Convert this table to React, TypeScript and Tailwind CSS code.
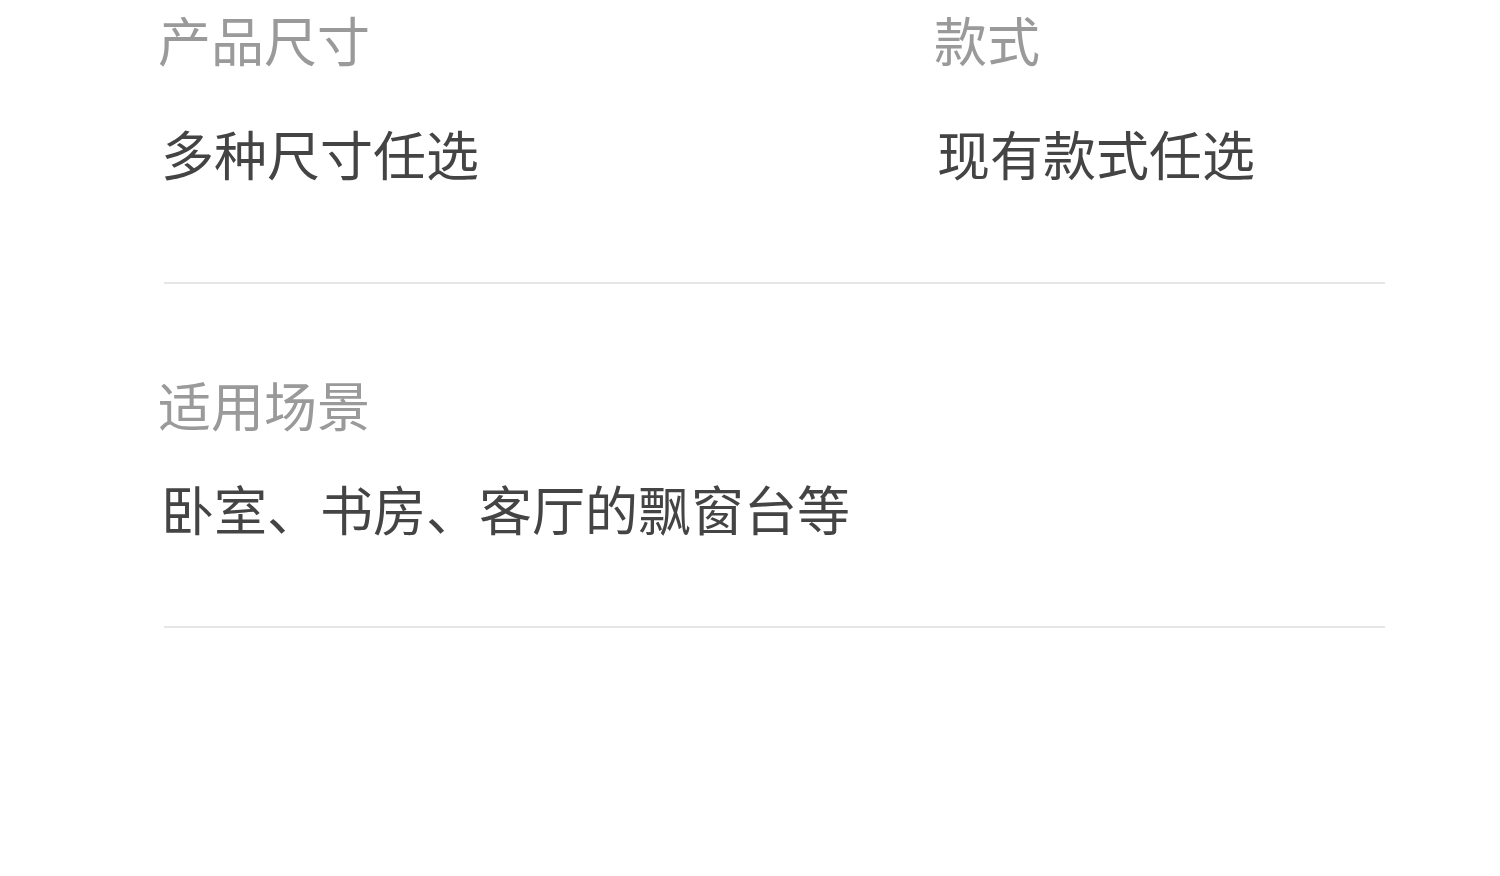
const rows = [
  [
    { label: '产品尺寸', value: '多种尺寸任选' },
    { label: '款式', value: '现有款式任选' },
  ],
  [{ label: '适用场景', value: '卧室、书房、客厅的飘窗台等' }],
];

export default function App() {
  return (
    <div
      className="min-h-screen bg-white"
      style={{ fontFamily: '"Noto Sans CJK SC", "Noto Sans", sans-serif' }}
    >
      <div className="pl-[158px] pr-[115px] pt-[13px]">
        {/* Row 1 */}
        <div className="flex">
          {rows[0].map((item, i) => (
            <div key={item.label} className={i === 0 ? 'w-[776px]' : 'flex-1'}>
              <div className="text-[53px] leading-[53px] text-[#9a9a9a]">{item.label}</div>
              <div className="mt-[61px] pl-[3px] text-[53px] leading-[53px] text-[#444]">{item.value}</div>
            </div>
          ))}
        </div>
        <div className="ml-[6px] mt-[102px] h-[2px] bg-[#e6e6e6]" />

        {/* Row 2 */}
        <div className="mt-[94px]">
          <div className="text-[53px] leading-[53px] text-[#9a9a9a]">{rows[1][0].label}</div>
          <div className="mt-[51px] pl-[3px] text-[53px] leading-[53px] text-[#444]">{rows[1][0].value}</div>
        </div>
        <div className="ml-[6px] mt-[91px] h-[2px] bg-[#e6e6e6]" />
      </div>
    </div>
  );
}
